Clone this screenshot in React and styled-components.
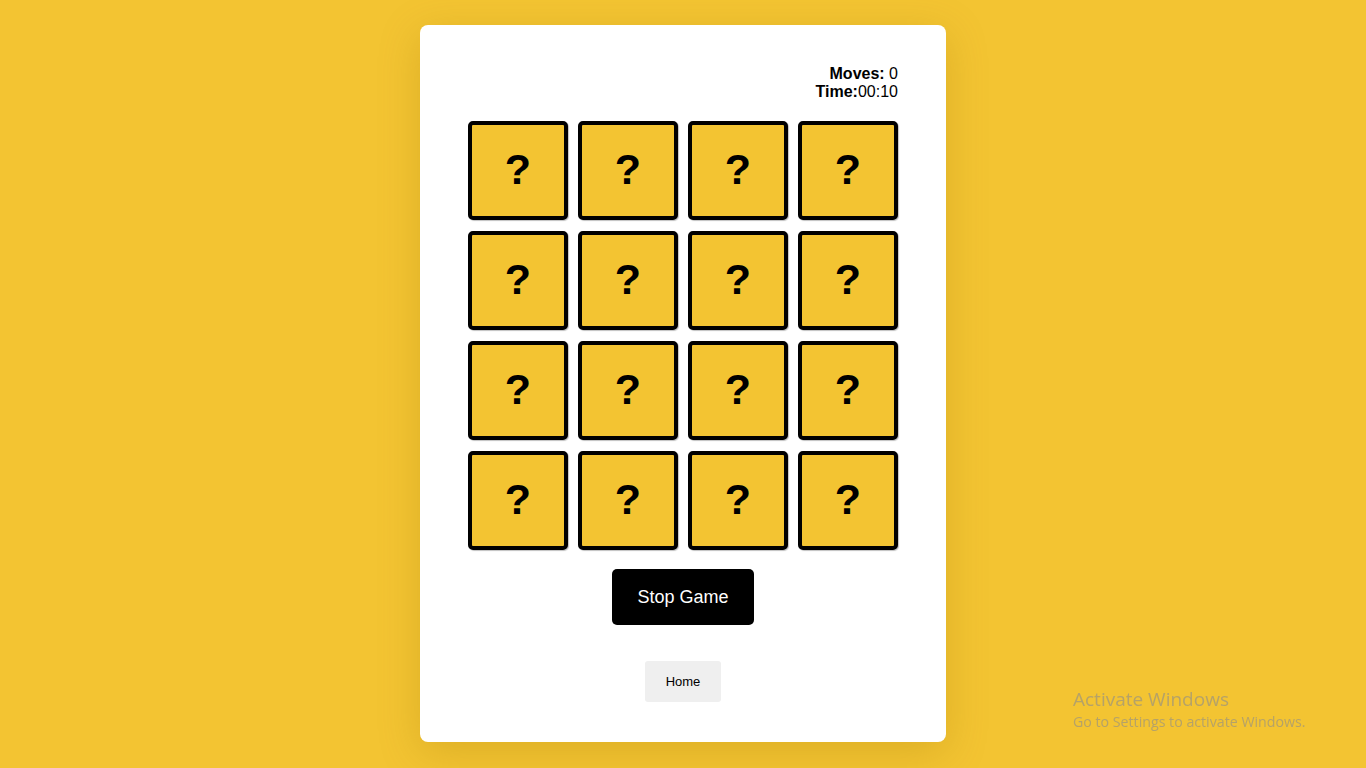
import React from "react";
import styled, { createGlobalStyle } from "styled-components";

const GlobalStyle = createGlobalStyle`
  body {
    margin: 0;
    background: #f3c432;
    font-family: "Liberation Sans", Arial, sans-serif;
  }
`;

const tiles = Array.from({ length: 16 }, (_, i) => i);

const App = () => {
  return (
    <>
      <GlobalStyle />
      <Page>
        <Card>
          <Stats>
            <div>
              <b>Moves:</b> 0
            </div>
            <div>
              <b>Time:</b>00:10
            </div>
          </Stats>
          <Grid>
            {tiles.map((t) => (
              <Tile key={t}>?</Tile>
            ))}
          </Grid>
          <StopButton>Stop Game</StopButton>
          <HomeButton>Home</HomeButton>
        </Card>
      </Page>
      <Watermark>
        <div>Activate Windows</div>
        <small>Go to Settings to activate Windows.</small>
      </Watermark>
    </>
  );
};

export default App;

const Page = styled.div`
  display: flex;
  justify-content: center;
  padding-top: 25px;
  height: 768px;
  box-sizing: border-box;
`;

const Card = styled.div`
  width: 526px;
  height: 717px;
  box-sizing: border-box;
  background: #fff;
  border-radius: 8px;
  padding: 40px 48px 40px;
  display: flex;
  flex-direction: column;
  align-items: center;
  box-shadow: 0 10px 40px rgba(150, 110, 0, 0.25);
`;

const Stats = styled.div`
  align-self: flex-end;
  text-align: right;
  font-size: 16px;
  line-height: 18px;
  color: #000;
  b {
    font-weight: 700;
  }
`;

const Grid = styled.div`
  margin-top: 20px;
  display: grid;
  grid-template-columns: repeat(4, 100px);
  grid-auto-rows: 99px;
  gap: 11px 10px;
`;

const Tile = styled.div`
  box-sizing: border-box;
  background: #f3c432;
  border: 4px solid #000;
  border-radius: 5px;
  box-shadow: 1px 1px 1px rgba(0, 0, 0, 0.25);
  display: flex;
  align-items: center;
  justify-content: center;
  padding-bottom: 3px;
  font-size: 43px;
  font-weight: 700;
  color: #000;
`;

const StopButton = styled.button`
  margin-top: 19px;
  width: 142px;
  height: 57px;
  background: #000;
  color: #fff;
  border: 0;
  border-radius: 5px;
  font-family: "Liberation Sans", Arial, sans-serif;
  font-size: 18px;
  cursor: pointer;
`;

const HomeButton = styled.button`
  margin-top: 36px;
  width: 76px;
  height: 41px;
  background: #efefef;
  color: #000;
  border: 0;
  border-radius: 3px;
  font-family: "Liberation Sans", Arial, sans-serif;
  font-size: 13px;
  cursor: pointer;
`;

const Watermark = styled.div`
  position: fixed;
  left: 1073px;
  top: 687px;
  color: rgba(140, 140, 140, 0.6);
  font-family: "Open Sans", "Noto Sans", sans-serif;
  font-size: 19px;
  line-height: 25px;
  pointer-events: none;
  small {
    display: block;
    font-size: 14.2px;
    line-height: 20px;
  }
`;
